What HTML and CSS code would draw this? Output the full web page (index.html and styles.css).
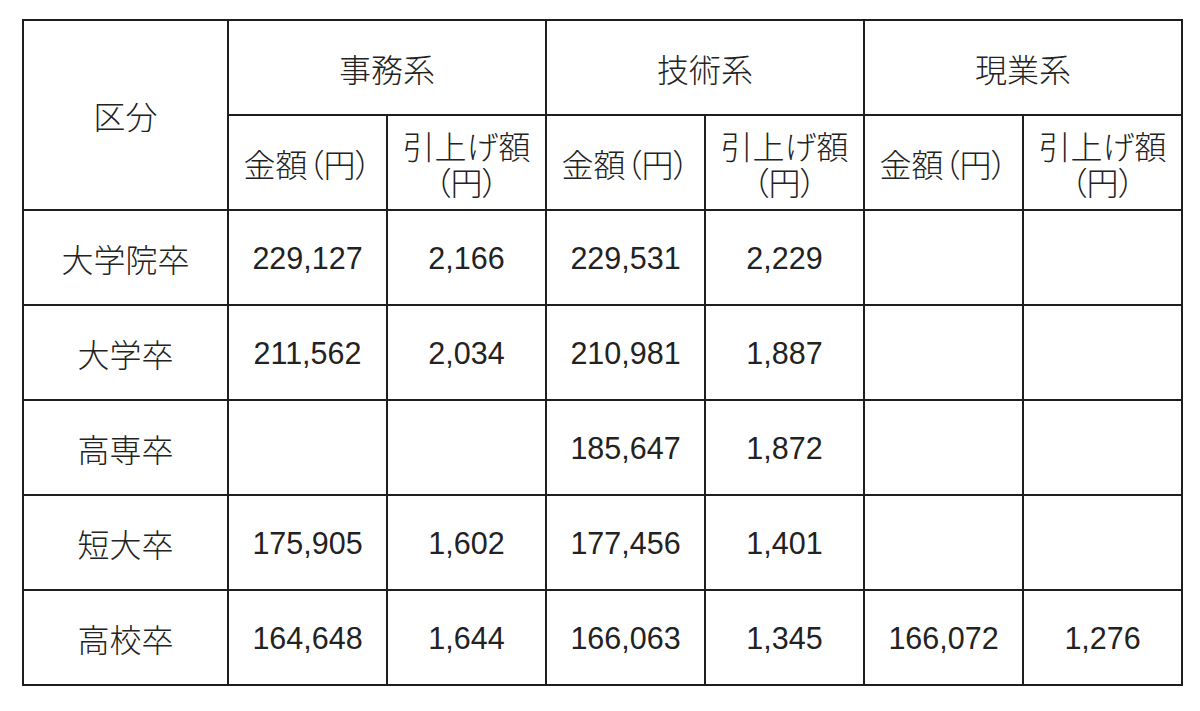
FILE: index.html
```html
<!DOCTYPE html>
<html lang="ja">
<head>
<meta charset="utf-8">
<link rel="stylesheet" href="styles.css">
</head>
<body>
<table class="pay">
  <colgroup>
    <col class="c-label">
    <col class="c-num"><col class="c-num">
    <col class="c-num"><col class="c-num">
    <col class="c-num"><col class="c-num">
  </colgroup>
  <tr>
    <th rowspan="2">区分</th>
    <th colspan="2">事務系</th>
    <th colspan="2">技術系</th>
    <th colspan="2">現業系</th>
  </tr>
  <tr>
    <th>金額（円）</th><th>引上げ額<br>（円）</th>
    <th>金額（円）</th><th>引上げ額<br>（円）</th>
    <th>金額（円）</th><th>引上げ額<br>（円）</th>
  </tr>
  <tr><th>大学院卒</th><td>229,127</td><td>2,166</td><td>229,531</td><td>2,229</td><td></td><td></td></tr>
  <tr><th>大学卒</th><td>211,562</td><td>2,034</td><td>210,981</td><td>1,887</td><td></td><td></td></tr>
  <tr><th>高専卒</th><td></td><td></td><td>185,647</td><td>1,872</td><td></td><td></td></tr>
  <tr><th>短大卒</th><td>175,905</td><td>1,602</td><td>177,456</td><td>1,401</td><td></td><td></td></tr>
  <tr><th>高校卒</th><td>164,648</td><td>1,644</td><td>166,063</td><td>1,345</td><td>166,072</td><td>1,276</td></tr>
</table>
</body>
</html>
```

FILE: styles.css
```css
html, body {
  margin: 0;
  padding: 0;
  background: #ffffff;
}
body {
  padding: 19px 0 0 22px;
  font-family: "Liberation Sans", "Noto Sans CJK JP", sans-serif;
  color: #222222;
}
.pay {
  border-collapse: collapse;
  table-layout: fixed;
  width: 1159px;
}
.c-label { width: 205px; }
.c-num { width: 159px; }
.pay tr { height: 95px; }
.pay th, .pay td {
  border: 2px solid #1e1e1e;
  padding: 0;
  text-align: center;
  vertical-align: middle;
  font-weight: normal;
}
.pay th {
  font-family: "Noto Sans CJK JP", sans-serif;
  font-size: 32px;
  font-weight: 300;
  line-height: 36px;
  font-feature-settings: "palt";
  white-space: nowrap;
}
.pay td {
  font-size: 30.5px;
  line-height: 36px;
}
```
